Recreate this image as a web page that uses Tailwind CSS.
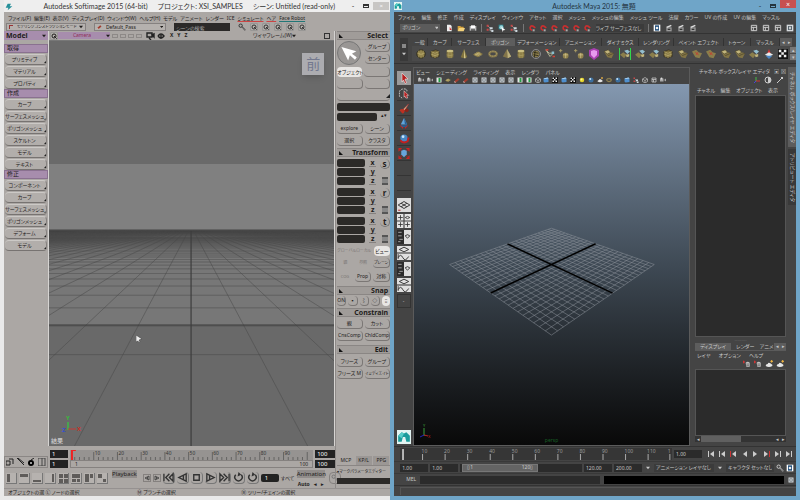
<!DOCTYPE html>
<html lang="ja">
  <head>
    <meta charset="UTF-8" />
    <meta name="viewport" content="width=device-width, initial-scale=1.0" />
    <title>Softimage / Maya</title>
    <script src="https://cdn.jsdelivr.net/npm/@tailwindcss/browser@4"></script>
  </head>
  <body class="bg-[#6fa5c8] font-['Noto_Sans','Noto_Sans_CJK_JP',sans-serif] text-[5px] leading-none [font-feature-settings:'palt'] whitespace-nowrap">
    <!-- shared icon symbols -->
    <svg class="hidden">
      <symbol id="arrow" viewBox="0 0 12 12"><path d="M3 1l1 9 2-2.500 2 3.500 1.500-1-2-3 3-.5z" fill="currentColor" /></symbol>
      <symbol id="down" viewBox="0 0 6 6"><path d="M0 1h6L3 5z" fill="currentColor" /></symbol>
      <symbol id="corner" viewBox="0 0 4 4"><path d="M4 0v4H0z" fill="#222" /></symbol>
      <symbol id="fold" viewBox="0 0 5 5"><path d="M0 0v5h5z" fill="#111" /></symbol>
      <symbol id="doc" viewBox="0 0 12 12"><path d="M3 1h5l2 2v8H3z" fill="#eee" /><path d="M7 4l3 5H7z" fill="#c33" /></symbol>
      <symbol id="folder" viewBox="0 0 12 12"><path d="M1 10V3h4l1 1h4v2z" fill="#d3a13c" /><path d="M3 6h9l-2 5H1z" fill="#f4d27a" /></symbol>
      <symbol id="save" viewBox="0 0 12 12"><path d="M1 3h10v7H1z" fill="#bbb" /><path d="M3 2h6v4H3z" fill="#fff" /><path d="M3 8h6v2H3z" fill="#444" /></symbol>
      <symbol id="nodes" viewBox="0 0 12 12"><path d="M2 2l4 4v4h5" stroke="#bbb" fill="none" /><path d="M1 1h3v3H1zM1 7h3v3H1z" fill="#c94848" /><path d="M6 5h4v3H6zM8 9h3v3H8z" fill="#cdd8df" /></symbol>
      <symbol id="pick" viewBox="0 0 12 12"><path d="M1 1h7v7H1z" fill="#2d8894" /><circle cx="5" cy="5" r="3" fill="#9fd6d9" /><path d="M5 4l6 5-3 .5L7 12z" fill="#fff" /></symbol>
      <symbol id="magnet" viewBox="0 0 12 12"><path d="M2 3l1 4c1 3 5 3 6-1L8 3" fill="none" stroke="#c92f2f" stroke-width="2.500" transform="rotate(140 6 6)" /><path d="M7 8h3v3H7z" fill="#aaa" /></symbol>
      <symbol id="clap" viewBox="0 0 12 12"><path d="M2 5h8v6H2z" fill="#999" /><path d="M2 4l7-3 1 2-7 3z" fill="#ddd" /><path d="M4 7h4v2H4z" fill="#333" /></symbol>
      <symbol id="render" viewBox="0 0 12 12"><path d="M1 1h10v10H1z" fill="#fff" /><path d="M3 2h6v8H3z" fill="#24517c" /><circle cx="6" cy="6" r="2" fill="#eee" /></symbol>
      <symbol id="panes" viewBox="0 0 12 12"><path d="M2 2h8v8H2zM2 5h8M5 5v5" fill="none" stroke="#ccc" stroke-width="1.500" /></symbol>
      <symbol id="sphere" viewBox="0 0 12 12"><circle cx="6" cy="6" r="5" fill="#82733f" stroke="#292617" /><path d="M1.500 5q4.500 3 9 0M6 1v10M3 2q2 4 0 8M9 2q-2 4 0 8" stroke="#cfc17c" stroke-width=".6" fill="none" /></symbol>
      <symbol id="cube" viewBox="0 0 12 12"><path d="M1 3l6-2 4 2v6l-5 2-5-2z" fill="#7b6c3a" stroke="#29251a" stroke-width=".7" /><path d="M1 3l5 2 5-2M6 5v6M3.500 4v6M8.500 4v6M1 6l5 2 5-2" stroke="#cdbf7d" stroke-width=".6" fill="none" /></symbol>
      <symbol id="cyl" viewBox="0 0 12 12"><path d="M2 2h8v8q-4 2-8 0z" fill="#82743f" /><ellipse cx="6" cy="2.500" rx="4" ry="1.500" fill="#cbbf82" /><path d="M4 4v7M6 4v7M8 4v7M2 7q4 2 8 0" stroke="#b9ab6a" stroke-width=".6" fill="none" /></symbol>
      <symbol id="cone" viewBox="0 0 12 12"><path d="M6 0l4 10q-4 2-8 0z" fill="#82743f" /><path d="M6 0v11l2 0z" fill="#d2c58a" /></symbol>
      <symbol id="plane" viewBox="0 0 12 12"><path d="M0 7l6-4 6 3-6 4z" fill="#8d7d45" /><path d="M2 5.500l6 3M4 4.500l6 3M3 8l6-3M2 7l6-3" stroke="#d5c78a" stroke-width=".6" /></symbol>
      <symbol id="torus" viewBox="0 0 12 12"><ellipse cx="6" cy="6" rx="4.500" ry="3" fill="none" stroke="#85774a" stroke-width="2.500" /><ellipse cx="6" cy="5.500" rx="4.500" ry="3" fill="none" stroke="#d2c48a" stroke-width=".7" stroke-dasharray="1 1" /></symbol>
      <symbol id="pyr" viewBox="0 0 12 12"><path d="M6 0l5 9-4 2-6-2z" fill="#83754a" /><path d="M6 0l5 9-4 2z" fill="#bdb07c" /></symbol>
      <symbol id="ring" viewBox="0 0 12 12"><circle cx="6" cy="6" r="5.400" fill="none" stroke="#aaa" stroke-width=".8" /><circle cx="6" cy="6" r="4" fill="#8b7d4b" /><path d="M3 4l6 1M3 7l6 1M5 2L4 10" stroke="#292617" /></symbol>
      <symbol id="curve" viewBox="0 0 12 12"><path d="M1 1l4 4h5L6 9z" fill="none" stroke="#c5c5a0" /><path d="M1 0h3v2H1zM9 8h3v2H9z" fill="#d04438" /><path d="M8 3h3v3H8z" fill="#8abfce" /></symbol>
      <symbol id="poly" viewBox="0 0 12 12"><path d="M0 3l5-2 3 3 4 1-3 6-5-1z" fill="#827445" /><path d="M5 1l3 3-4 2-4-3zM5 8l7-3" fill="#c2b57c" stroke="#373220" stroke-width=".6" /></symbol>
      <symbol id="polyb" viewBox="0 0 12 12"><path d="M0 7l4-3 4 3-3 4z" fill="#8b7e4b" /><path d="M5 2l4-1 3 2-3 3z" fill="#94bfcf" /><path d="M7 7l4-1v3L8 10z" fill="#c4b67c" /></symbol>
      <symbol id="polyr" viewBox="0 0 12 12"><path d="M0 3l5-2 3 3 4 1-3 6-5-1z" fill="#8b7e4b" /><path d="M4 4l4 3M7 4L5 7" stroke="#c83a2e" /></symbol>
      <symbol id="dots" viewBox="0 0 12 12"><circle cx="8" cy="8" r="3.500" fill="#8f804b" /><path d="M5 7h6M8 5v6" stroke="#ded19a" stroke-width=".7" /><path d="M0 2h4M2 0v4" stroke="#b1a369" /></symbol>
      <symbol id="gem" viewBox="0 0 12 12"><path d="M1 2l5-2 5 2v6l-5 4-5-4z" fill="#a93fb0" /><path d="M3 3l3-1 3 1v4L6 10 3 7z" fill="#e79aee" /></symbol>
      <symbol id="topc" viewBox="0 0 12 12"><path d="M6 0l2 5H4z" fill="#d33" /><path d="M1 7l5-3 5 3-5 2z" fill="#e8e8e8" /><path d="M2 8h8l-4 4z" fill="#4a86c8" /></symbol>
      <symbol id="check" viewBox="0 0 12 12"><path d="M0 0h12v12H0z" fill="#111" /><path d="M1 1h3v3H1zM7 1h3v3H7zM4 4h3v3H4zM1 7h3v3H1zM7 7h3v3H7z" fill="#eee" /></symbol>
      <symbol id="box" viewBox="0 0 12 12"><path d="M1 1h10v10H1z" fill="#d5d9dc" /><path d="M3 3h6v6H3z" fill="#58656d" /><path d="M5 4h2v4H5z" fill="#fff" /></symbol>
      <symbol id="green" viewBox="0 0 12 12"><path d="M1 1h10v10H1z" fill="#e6e6e6" /><path d="M5 2h4v8H5z" fill="#239a43" /></symbol>
      <symbol id="wire" viewBox="0 0 12 12"><path d="M1 4l5-3 5 3v5l-5 3-5-3zM1 4l5 3 5-3M6 7v5" fill="none" stroke="#bbb" stroke-width="1.500" /></symbol>
      <symbol id="blue" viewBox="0 0 12 12"><path d="M1 3l8-2 2 2v7l-8 1-2-2z" fill="#4f8fce" /><path d="M1 3l8-2 2 2-8 1z" fill="#b5d9f2" /></symbol>
      <symbol id="bulb" viewBox="0 0 12 12"><circle cx="6" cy="6" r="4.500" fill="#e4d427" /><circle cx="5" cy="5" r="2" fill="#fff6a0" /></symbol>
      <symbol id="ball" viewBox="0 0 12 12"><circle cx="6" cy="6" r="5" fill="#3c6f9f" /><circle cx="4.500" cy="4" r="2" fill="#c8e4f8" /></symbol>
      <symbol id="cam" viewBox="0 0 12 12"><path d="M0 3h7v6H0zM8 6l4-3v6z" fill="#aaa" /><circle cx="3" cy="3" r="2" fill="#ddd" /></symbol>
      <symbol id="pen" viewBox="0 0 12 12"><path d="M1 8l7-6 3 3-7 6H1z" fill="#a23d30" /><path d="M1 8l3 3H1z" fill="#eee" /></symbol>
      <symbol id="sel" viewBox="0 0 12 12"><path d="M4 1l6 6H7l1.500 4-1.500.5L5.500 8 4 10z" fill="#b52222" stroke="#fff" stroke-width=".5" /></symbol>
      <symbol id="lasso" viewBox="0 0 12 12"><path d="M1 4q1-3 5-3t3 3M1 5v4l3 2" stroke="#ccc" stroke-dasharray="2 1" fill="none" /><path d="M6 3l5 5H9l1 3H8L7 9l-1 1z" fill="#b52222" stroke="#fff" stroke-width=".5" /></symbol>
      <symbol id="brush" viewBox="0 0 12 12"><path d="M11 1L5 7l2 1z" fill="#e6c49a" stroke="#a33" stroke-width=".6" /><path d="M1 8q3-3 6 0l-1 3q-2 1-3-1z" fill="#bd3021" /><circle cx="9" cy="8" r="2" fill="#8c2218" /></symbol>
      <symbol id="move" viewBox="0 0 12 12"><path d="M6 0l3.500 7h-7z" fill="#62a4dc" /><path d="M6 0l1 7h2.500z" fill="#2a6093" /><path d="M1 8l4 1v3zM11 8l-4 1v3z" fill="#cc2424" /><path d="M3 7q3 2 6 0v2q-3 2-6 0z" fill="#2c5d90" /></symbol>
      <symbol id="rot" viewBox="0 0 12 12"><circle cx="6" cy="5.500" r="4" fill="#4887c3" /><circle cx="5" cy="4" r="1.500" fill="#cae5fa" /><path d="M2 8q3 4 8 1l1-4" stroke="#c41f1f" stroke-width="2" fill="none" /></symbol>
      <symbol id="scale" viewBox="0 0 12 12"><path d="M0 0h4L0 4zM12 0v4L8 0zM0 12V8l4 4zM12 12H8l4-4z" fill="#cc2424" /><path d="M1 1l10 10M11 1L1 11" stroke="#b32020" /><path d="M3 3l3-1 3 1v4L6 10 3 7z" fill="#68a6dc" /></symbol>
      <symbol id="persp" viewBox="0 0 12 12"><path d="M0 0h12v12H0z" fill="#dcdcdc" /><path d="M1 6l5-3 5 3-5 3zM3.500 4.500l5 3M8.500 4.500l-5 3" fill="none" stroke="#333" stroke-width=".8" /><path d="M1 10h2v1H1z" fill="#b44" /></symbol>
      <symbol id="four" viewBox="0 0 12 12"><path d="M0 0h12v12H0z" fill="#e3e3e3" /><path d="M6 0v12M0 6h12" stroke="#444" /><path d="M3 1v4M1 3h4M3 7v4M1 9h4M9 7v4M7 9h4M7 3l2-1 2 1-2 1z" stroke="#333" stroke-width=".7" fill="none" /></symbol>
      <symbol id="split" viewBox="0 0 12 12"><path d="M0 0h12v12H0z" fill="#2c2c2c" /><path d="M6 0h6v12H6z" fill="#dedede" /><path d="M1 2h3M1 5h3M2 8h3M1 10h2" stroke="#aaa" stroke-width=".8" /><path d="M7 5l2-1 2 1-2 2z" fill="none" stroke="#222" stroke-width=".7" /></symbol>
      <symbol id="graph" viewBox="0 0 12 12"><path d="M0 0h12v12H0z" fill="#dfdfdf" /><path d="M0 6h12" stroke="#444" /><path d="M2 3l4-2 4 2-4 2zM1 11V7M1 10q2-4 4 0t5-1" fill="none" stroke="#333" stroke-width=".8" /></symbol>
      <symbol id="maya" viewBox="0 0 12 12"><path d="M0 0h12v12H0z" fill="#e3f4f2" /><path d="M1 10V5l3-3 2 1 2-1 3 3v5H8L7 6H5l-1 4z" fill="#1b9c9b" /><path d="M1 5l3-3 2 1-2 4z" fill="#55ccc7" /></symbol>
      <symbol id="soft" viewBox="0 0 12 12"><path d="M4 1h5L7 5h4L4 11l1-4H1z" fill="#258f99" /></symbol>
      <symbol id="cloud" viewBox="0 0 12 12"><path d="M1 9q0-3 3-3 1-3 4-1l3 2v2q-5 3-10 0z" fill="#e6e6e6" /><path d="M10 0v4M8 2h4" stroke="#f3b743" stroke-width="1.500" /></symbol>
      <symbol id="lay" viewBox="0 0 12 12"><path d="M1 1v4M0 3h3" stroke="#d33" stroke-width="1.500" /><path d="M4 4q3-3 6 0v6H5z" fill="#c2c2c2" /><path d="M5 6h4M5 8h4" stroke="#555" /></symbol>
      <symbol id="skey" viewBox="0 0 12 12"><circle cx="4" cy="4" r="2.500" fill="none" stroke="currentColor" stroke-width="1.500" /><path d="M6 6l4 5 1-1-4-4" stroke="currentColor" fill="none" /></symbol>
      <symbol id="gearb" viewBox="0 0 12 12"><path d="M1 1h10v10H1z" fill="#b5b2ae" stroke="#888" /><circle cx="6" cy="6" r="3" fill="none" stroke="currentColor" stroke-width="1.500" /><path d="M6 6l4 4" stroke="currentColor" stroke-width="1.500" /></symbol>
      <symbol id="loop" viewBox="0 0 12 12"><path d="M3 3a4 4 0 1 0 6 0" fill="none" stroke="#333" stroke-width="1.600" /><path d="M6 0l3 3-4 2z" fill="#333" /></symbol>
      <symbol id="first" viewBox="0 0 12 12"><path d="M1 2v8M7 2L3 6l4 4M11 2L7 6l4 4z" fill="none" stroke="#333" stroke-width="1.500" /></symbol>
      <symbol id="playb" viewBox="0 0 12 12"><path d="M10 2v8L2 6zM7 4v4" fill="none" stroke="#333" stroke-width="1.500" /></symbol>
      <symbol id="stop" viewBox="0 0 12 12"><path d="M3 3h6v6H3z" fill="none" stroke="#333" stroke-width="1.500" /></symbol>
    </svg>

    <div class="flex h-screen">
      <!-- Softimage -->
      <section class="flex min-w-0 flex-[392] flex-col overflow-hidden border-b-4 border-l-4 border-[#e9e9e9] bg-[#aba7a4] text-[#1f1d1c]">
        <header class="flex h-3 shrink-0 items-center bg-[#eeeeee] px-px font-['Lato','Noto_Sans_CJK_JP',sans-serif] text-[7px] text-[#333]">
          <svg class="mt-px size-2"><use href="#soft" /></svg>
          <h1 class="flex flex-1 justify-end gap-2.5 pr-3"><span>Autodesk Softimage 2015 (64-bit)</span><span>プロジェクト: XSI_SAMPLES</span><span>シーン: Untitled (read-only)</span></h1>
          <button class="w-3" aria-label="最小化">-</button>
          <button class="mx-1 h-1 w-1.5 border border-t-2 border-[#333]" aria-label="最大化"></button>
          <button class="h-2 w-4 bg-[#c8c6c4] text-[6px] leading-none text-white" aria-label="閉じる">×</button>
        </header>

        <nav id="softMenu" class="flex h-2.5 w-[78%] shrink-0 items-center justify-between pt-0.5 pl-1"></nav>

        <div class="flex h-[9px] shrink-0 items-center gap-2 pt-px pl-0.5">
          <label class="flex h-2 w-20 items-center border border-[#858180] bg-[#b5b1ae] px-0.5"><span class="mr-1 h-1 w-1 border-t border-l border-[#933]"></span>
            <select class="w-full appearance-none text-[4px]" aria-label="モード"><option>モデリングコンストラクションモード</option></select><svg class="size-1 shrink-0"><use href="#down" /></svg></label>
          <label class="flex h-2 w-18 items-center border border-[#858180] bg-[#b5b1ae] px-0.5"><svg class="mr-1 size-1.5"><use href="#pen" /></svg>
            <select class="w-full appearance-none" aria-label="パス"><option>Default_Pass</option></select><svg class="size-1"><use href="#down" /></svg></label>
          <input class="h-2 w-14 bg-[#2b2928] px-0.5 text-[#aaa]" value="シーンの検索" aria-label="シーンの検索" />
          <div id="softTools" class="flex gap-1"></div>
        </div>

        <div class="flex min-h-0 flex-1">
          <div class="flex min-w-0 flex-1 flex-col">
            <div class="flex min-h-0 flex-1">
              <aside id="softSide" class="w-11 shrink-0"></aside>
              <!-- camera view -->
              <main class="flex min-w-0 flex-1 flex-col border-r border-l border-[#d6d4d2]">
                <div class="flex h-2.5 items-center border-b border-[#777] pl-px">
                  <svg class="size-2"><use href="#gearb" /></svg>
                  <button class="flex h-[7px] w-[52px] items-center justify-center bg-[#a78dad]"><span class="flex-1 text-[#902d58]">Camera</span><svg class="size-1"><use href="#down" /></svg></button>
                  <span class="ml-0.5 flex gap-0.5"><i class="h-1 w-1.5 border border-[#8d8987]"></i><i class="h-1 w-1.5 border border-[#8d8987]"></i><i class="h-1 w-1.5 border border-[#8d8987]"></i><i class="h-1 w-1.5 border border-[#8d8987]"></i></span>
                  <svg class="ml-1 h-2 w-5" viewBox="0 0 20 8"><path d="M1 1h5v4H1zM6 3l2-1v3zM3 6l2 2M12 4q3-4 6 0-3 4-6 0M15 3v4" fill="none" stroke="#222" stroke-width="1.400" /></svg>
                  <b class="ml-1 flex gap-1"><span>X</span><span>Y</span><span>Z</span></b>
                  <span class="ml-auto flex items-center">ワイヤフレーム(W) <svg class="size-1"><use href="#down" /></svg></span>
                  <button class="mr-1 ml-7 size-1.5 border border-[#333]" aria-label="最大化"></button>
                </div>
                <div class="relative min-h-0 flex-1 bg-[#696969]">
                  <svg id="floor" class="size-full" viewBox="0 0 285 405" preserveAspectRatio="xMidYMid slice"></svg>
                  <button class="absolute top-3 right-2.5 flex size-[22px] items-center justify-center bg-[#acacb0] text-[14px] text-[#73788e] shadow-md">前</button>
                  <svg class="absolute top-[294px] left-[87px] h-2 w-1.5" viewBox="0 0 6 8"><path d="M0 0v7l2-1 1 2 1-1-1-2 3-1z" fill="#eee" stroke="#333" stroke-width=".5" /></svg>
                  <svg class="absolute bottom-3 left-3 h-5 w-6 overflow-visible text-[6px] font-bold" viewBox="0 0 24 20"><path d="M7 16V8" stroke="#3fb847" stroke-width="1.500" /><path d="M7 15h8" stroke="#c83b35" /><text x="5" y="6" fill="#39b73e">Y</text><text x="16" y="17" fill="#c8342a">X</text><text x="1" y="18" fill="#3550d2">Z</text></svg>
                  <span class="absolute bottom-0.5 left-0.5 text-[6px] text-[#ddd]">結果</span>
                </div>
              </main>
            </div>
            <!-- time slider -->
            <div class="flex h-[22px] shrink-0 items-end pt-0.5">
              <div class="flex h-3 w-11 shrink-0 items-center justify-around border border-[#8b8785] text-[#222]">
                <svg class="size-2" viewBox="0 0 8 8"><path d="M0 3h4v4H0zM3 1h4v5" fill="none" stroke="#222" /></svg><svg class="size-2" viewBox="0 0 8 8"><path d="M0 0l7 7M1 0l6 5" stroke="#222" /></svg><svg class="size-2" viewBox="0 0 8 8"><circle cx="4" cy="5" r="3" /><path d="M4 2l3-2" stroke="#222" /><circle cx="4" cy="5" r="1" fill="#ccc" /></svg><svg class="size-2" viewBox="0 0 8 8"><path d="M0 0h7v8H0zM4 0v8" fill="none" stroke="#444" /></svg>
              </div>
              <div class="ml-0.5 flex w-[18px] flex-col gap-0.5"><input class="h-2 w-full bg-[#222] px-0.5 text-[6px] text-white" value="1" aria-label="開始" /><input class="h-2 w-full bg-[#222] px-0.5 text-[6px] text-white" value="1" aria-label="範囲開始" /></div>
              <div class="mx-0.5 min-w-0 flex-1">
                <svg id="softRuler" class="h-2.5 w-full bg-[#969391] text-[5px]" viewBox="0 0 248 10" preserveAspectRatio="none"></svg>
                <div class="flex h-2 items-center justify-between border border-[#85817f] px-1"><span>1</span><span>100</span></div>
              </div>
              <div class="flex w-5 flex-col gap-0.5"><input class="h-2 w-full bg-[#222] px-0.5 text-[6px] text-white" value="100" aria-label="終了" /><input class="h-2 w-full bg-[#222] px-0.5 text-[6px] text-white" value="100" aria-label="範囲終了" /></div>
            </div>
            <div class="flex h-5 shrink-0 items-center gap-0.5 pl-0.5">
              <div id="layouts" class="flex gap-0.5"></div>
              <button class="mr-1 mb-2 ml-0.5 h-2 w-7 bg-[#918d8b] text-[6px] leading-none">Playback</button>
              <div id="transport" class="flex items-center gap-0.5"></div>
              <input class="h-2 w-[18px] rounded-xs bg-[#222] px-1 text-[6px] text-white" value="1" aria-label="フレーム" />
              <button class="w-3">すべて</button>
              <div class="ml-0.5 flex w-7 flex-col items-center gap-1"><button class="h-2 w-full bg-[#918d8b] text-[6px] leading-none">Animation</button><span class="flex gap-1 font-bold">Auto <span>◂</span><span>▸</span></span></div>
              <button class="ml-0.5 flex size-3 shrink-0 items-center justify-center rounded border border-[#85817f] text-[#777]" aria-label="キー"><svg class="size-2"><use href="#skey" /></svg></button>
            </div>
          </div>
          <aside id="mcp" class="flex w-[55px] shrink-0 flex-col border-l border-[#8e8a88] pl-px"></aside>
        </div>
        <footer class="flex h-2 shrink-0 items-center border-t border-[#959190] pl-1"><span class="flex-[130]">オブジェクトの選 Ⓛ ノードの選択</span><span class="flex-[105]">Ⓜ ブランチの選択</span><span class="flex-[150]">Ⓡ ツリー/チェインの選択</span></footer>
      </section>

      <!-- Maya -->
      <section class="flex min-w-0 flex-[408] flex-col overflow-hidden border-r-4 border-b-4 border-l-4 border-[#6fa5c8] bg-[#444444] text-[#c8c8c8]">
        <header class="flex h-3 shrink-0 items-center bg-[#6fa5c8] font-['Lato','Noto_Sans_CJK_JP',sans-serif] text-[7px] text-[#24343f]">
          <svg class="size-2"><use href="#maya" /></svg>
          <h1 class="flex-1 pl-8 text-center">Autodesk Maya 2015: 無題</h1>
          <button class="w-3" aria-label="最小化">-</button><button class="mx-1 h-1 w-1.5 border border-t-2 border-[#24343f]" aria-label="最大化"></button>
          <button class="mb-1 h-2 w-4 bg-[#c75050] text-[7px] leading-none text-white" aria-label="閉じる">×</button>
        </header>
        <nav id="mayaMenu" class="flex h-2.5 w-[96%] shrink-0 items-center justify-between pl-1"></nav>
        <div class="flex h-3 shrink-0 items-center justify-between border-b border-[#333] pr-0.5 pl-1.5">
          <label class="flex h-2 w-10 items-center bg-[#5b5b5b] px-0.5"><select class="w-full appearance-none" aria-label="メニューセット"><option>ポリゴン</option></select><svg class="size-1"><use href="#down" /></svg></label>
          <div id="status1" class="flex gap-1"></div>
          <div id="status2" class="flex gap-1 border-l border-[#777] pl-1"></div>
          <div id="status3" class="flex gap-[3px] border-l border-[#777] pl-1"></div>
          <label><input class="h-2 w-12 bg-[#3b3b3b]" value="ライブ サーフェスなし" aria-label="ライブ サーフェス" /></label>
          <div id="status4" class="flex gap-1 border-l border-[#777] pl-1"></div>
          <div id="status5" class="ml-12 flex gap-1"></div>
        </div>
        <!-- shelf -->
        <div class="flex h-[30px] shrink-0 gap-1 border-b border-[#333] pt-1 pb-0.5 pl-1.5">
          <div class="flex w-2 flex-col items-center justify-center gap-1 bg-[#393939]"><i class="size-1 bg-[#888]"></i><svg class="size-1"><use href="#down" /></svg></div>
          <div class="flex min-w-0 flex-1 flex-col">
            <div id="shelfTabs" class="flex h-2 items-stretch"></div>
            <div class="flex flex-1 items-center gap-0.5 bg-[#4a4a4a] pl-1">
              <div id="shelf" class="flex min-w-0 flex-1 items-center justify-between"></div>
              <div class="flex w-1.5 flex-col gap-px text-center"><button class="h-1.5 bg-[#777] leading-none" aria-label="上">▴</button><button class="h-1.5 bg-[#777] leading-none" aria-label="下">▾</button></div>
            </div>
          </div>
        </div>

        <div class="flex min-h-0 flex-1 pt-[3px]">
          <aside id="toolbox" class="flex w-[19px] shrink-0 flex-col items-center pt-1"></aside>
          <main class="flex min-w-0 flex-1 flex-col border border-[#5b5b5b]">
            <nav id="panelMenu" class="flex h-2 w-[53%] items-center justify-between pl-0.5"></nav>
            <div id="panelIcons" class="flex h-2 w-11/12 items-center justify-between pl-1"></div>
            <div class="relative min-h-0 flex-1 bg-linear-to-b from-[#8498b0] via-[#3f4a55] to-[#090909]">
              <svg id="grid" class="size-full" viewBox="0 0 274 358" preserveAspectRatio="xMidYMid slice"></svg>
              <svg class="absolute bottom-1.5 left-1 h-4 w-3 overflow-visible text-[4px]" viewBox="0 0 12 16"><path d="M6 13V5" stroke="#3a9e3a" /><path d="M6 12l4 1" stroke="#b22" /><path d="M6 12l-4 2" stroke="#22b" /><text x="5" y="4" fill="#3a9e3a">Y</text><text x="10" y="15" fill="#c22">X</text></svg>
              <span class="absolute inset-x-0 bottom-0.5 text-center text-[#175e25]">persp</span>
            </div>
          </main>
          <!-- channel box / layer editor -->
          <aside class="ml-1 flex w-[94px] shrink-0 flex-col pr-0.5 pl-px">
            <h2 class="flex h-2 items-center"><span class="flex-1 text-center">チャネル ボックス/レイヤ エディタ</span><span class="flex gap-0.5"><button aria-label="フロート">▣</button><button aria-label="閉じる">⊠</button></span></h2>
            <div class="flex h-2.5 items-center justify-end gap-1 pr-0.5"><svg class="size-1.5" viewBox="0 0 6 6"><path d="M2 4V0" stroke="#4b4" /><path d="M2 4h4" stroke="#c33" /><path d="M2 4L0 6" stroke="#44d" /></svg><svg class="size-2" viewBox="0 0 8 8"><circle cx="4" cy="4" r="3" fill="none" stroke="#ccc" /><path d="M4 1a3 3 0 0 1 0 6z" fill="#ccc" /></svg><svg class="size-2" viewBox="0 0 8 8"><path d="M1 7l6-6M5 1l2 2" stroke="#ccc" /></svg></div>
            <nav class="flex h-2.5 items-center justify-between pr-2 pl-0.5"><a href="#">チャネル</a><a href="#">編集</a><a href="#">オブジェクト</a><a href="#">表示</a></nav>
            <div class="min-h-0 flex-1 border border-[#555] bg-[#2b2b2b]"></div>
            <div class="flex h-1.5 items-center justify-center text-[#777]">·········</div>
            <div class="flex h-2 items-stretch border-b border-[#5b5b5b]"><button class="flex-[34] bg-[#5d5d5d]">ディスプレイ</button><button class="flex-[26]">レンダー</button><button class="flex-[14]">アニメ</button><button class="w-1.5 bg-[#5d5d5d]" aria-label="前">◂</button><button class="w-1.5 bg-[#5d5d5d]" aria-label="次">▸</button></div>
            <nav class="flex h-2 w-3/4 items-center justify-between pl-0.5"><a href="#">レイヤ</a><a href="#">オプション</a><a href="#">ヘルプ</a></nav>
            <div id="layerIcons" class="flex h-2.5 items-center justify-end gap-[3px] pr-0.5"></div>
            <div class="h-[67px] border border-[#555] bg-[#2b2b2b]"></div>
            <div class="mb-1 flex h-1.5 items-center bg-[#333]"><button class="w-1.5" aria-label="左">◂</button><span class="h-full w-10 bg-[#606060]"></span><button class="ml-auto w-1.5" aria-label="左へ">◂</button><button class="w-1.5" aria-label="右へ">▸</button></div>
          </aside>
          <div class="flex w-2 shrink-0 flex-col gap-0.5"><button class="h-20 bg-[#5d5d5d] [text-orientation:sideways] [writing-mode:vertical-rl]">チャネル ボックス/レイヤ エディタ</button><button class="h-14 bg-[#393939] [text-orientation:sideways] [writing-mode:vertical-rl]">アトリビュート エディタ</button></div>
        </div>

        <!-- time slider, range slider, command line -->
        <div class="flex h-[15px] shrink-0 items-center gap-0.5 border-t border-[#333] pl-1.5">
          <svg id="mayaRuler" class="h-3 min-w-0 flex-[270] bg-[#363636] text-[5px]" viewBox="0 0 270 12" preserveAspectRatio="none"></svg>
          <input class="h-2 w-7 bg-[#2b2b2b] px-0.5" value="1.00" aria-label="現在のフレーム" />
          <div id="mayaPlay" class="flex w-[92px] items-center justify-between px-1"></div>
        </div>
        <div class="flex h-3 shrink-0 items-center gap-0.5 border-t border-[#393939] pl-1.5">
          <input class="h-2 w-7 bg-[#2b2b2b] px-0.5" value="1.00" aria-label="アニメーション開始" /><input class="h-2 w-7 bg-[#2b2b2b] px-0.5" value="1.00" aria-label="再生開始" />
          <div class="h-2 min-w-0 flex-1 bg-[#2b2b2b]"><div class="ml-0.5 flex h-full w-5/8 items-center justify-between border border-[#777] bg-[#646464] px-1"><span>▯1</span><span>120▯</span></div></div>
          <input class="h-2 w-7 bg-[#2b2b2b] px-0.5" value="120.00" aria-label="再生終了" /><input class="h-2 w-7 bg-[#2b2b2b] px-0.5" value="200.00" aria-label="アニメーション終了" />
          <svg class="mx-0.5 size-1"><use href="#down" /></svg>
          <select class="h-2 w-[60px] appearance-none bg-[#3b3b3b] px-0.5" aria-label="アニメーション レイヤ"><option>アニメーション レイヤなし</option></select>
          <svg class="mx-0.5 size-1"><use href="#down" /></svg>
          <select class="h-2 w-[48px] appearance-none bg-[#3b3b3b] px-0.5" aria-label="キャラクタ セット"><option>キャラクタ セットなし</option></select>
          <svg class="size-2"><use href="#skey" /></svg><svg class="mr-0.5 size-2"><use href="#render" /></svg>
        </div>
        <div class="flex h-3 shrink-0 items-center gap-1 border-t border-[#393939] pl-3">
          <label for="mel">MEL</label><input id="mel" class="h-2 min-w-0 flex-1 bg-[#2b2b2b]" /><output class="h-2 min-w-0 flex-1 bg-black"></output><svg class="mr-0.5 size-1.5"><use href="#box" /></svg>
        </div>
        <footer class="h-[11px] shrink-0 border-t border-[#333] pt-px pl-1.5"><div class="h-2 border-t border-l border-[#555]"></div></footer>
      </section>
    </div>

    <script>
      const put = (id, html) => (document.getElementById(id).innerHTML = html);
      const icons = (names, cls) => names.split(" ").map((n) => `<button class="${cls}" aria-label="${n}"><svg class="size-full"><use href="#${n}"/></svg></button>`).join("");
      const links = (list) => list.map((t) => `<a href="#">${t}</a>`).join("");

      put("softMenu", links(["ファイル(F)", "編集(E)", "表示(V)", "ディスプレイ(D)", "ウィンドウ(W)", "ヘルプ(H)", "モデル", "アニメート", "レンダー", "ICE"])
        + `<a href="#" class="underline decoration-[#c44]">シミュレート</a><a href="#" class="underline decoration-[#c44]">ヘア</a><a href="#" class="underline decoration-[#277]">Face Robot</a>`);
      put("softTools", icons("skey gearb gearb gearb gearb gearb", "size-2 text-[#333]"));
      put("mayaMenu", links(["ファイル", "編集", "修正", "作成", "ディスプレイ", "ウィンドウ", "アセット", "選択", "メッシュ", "メッシュの編集", "メッシュ ツール", "法線", "カラー", "UV の作成", "UV の編集", "マッスル"]));
      put("panelMenu", links(["ビュー", "シェーディング", "ライティング", "表示", "レンダラ", "パネル"]));

      // Softimage left toolbar
      const groups = [
        ["取得", ["プリミティブ", "マテリアル", "プロパティ"]],
        ["作成", ["カーブ", "サーフェスメッシュ", "ポリゴンメッシュ", "スケルトン", "モデル", "テキスト"]],
        ["修正", ["コンポーネント", "カーブ", "サーフェスメッシュ", "ポリゴンメッシュ", "デフォーム", "モデル"]],
      ];
      put("softSide", `<button class="mb-1 flex h-[9px] w-full items-center justify-between bg-[#a78dad] px-0.5 text-[7px] font-bold">Model<svg class="size-1"><use href="#down"/></svg></button>`
        + groups.map(([title, items]) => `<h2 class="h-[9px] border border-[#8a7190] bg-[#a78dad] px-0.5 text-[6px] leading-none">${title}</h2>`
          + items.map((t) => `<div class="h-3 px-px pt-px"><button class="flex h-[11px] w-full items-center rounded-sm border-t border-r border-b border-t-[#ccc9c6] border-r-[#85817f] border-b-[#777371] bg-[#b2aeab]"><span class="flex-1">${t}</span><svg class="mt-1 size-0.5"><use href="#corner"/></svg></button></div>`).join("")).join(""));

      // Softimage main command panel
      const head = (t) => `<h2 class="flex h-[9px] shrink-0 items-center justify-between border-y border-[#8a8684] bg-[#a09c99] px-0.5 text-[7px] font-bold"><svg class="size-1"><use href="#fold"/></svg>${t}</h2>`;
      const key = (t) => `<button class="h-2.5 min-w-0 flex-1 rounded-sm border-r border-b border-[#7b7775]">${t}</button>`;
      const dim = (t) => `<button class="h-2.5 min-w-0 flex-1 text-[4px] text-[#777371]">${t}</button>`;
      const on = (t) => `<button class="h-2.5 min-w-0 flex-1 rounded-sm bg-[#e8e6e4]">${t}</button>`;
      const small = (t) => `<button class="h-2.5 min-w-0 flex-1 rounded-sm border-r border-b border-[#7b7775] text-[4px]">${t}</button>`;
      const row = (...cells) => `<div class="mb-0.5 flex h-2.5 gap-0.5">${cells.join("")}</div>`;
      const srt = (mode) => `<div class="mb-[3px] flex gap-1"><div class="flex w-7 flex-col gap-px">${`<input class="h-2 w-full rounded-xs bg-[#2c2a28]" aria-label="${mode}"/>`.repeat(3)}</div>
        <div class="flex flex-1 flex-col gap-px text-[7px] font-bold leading-none">${["x", "y", "z"].map((a) => `<button class="h-2 border-b border-[#85817f] leading-none">${a}</button>`).join("")}</div>
        <div class="flex w-2.5 flex-col items-center justify-between"><button class="size-2.5 rounded-full border-r border-b border-[#777] text-[8px] font-bold leading-none">${mode}</button><i class="h-2 w-1.5 border-y-2 border-[#555] bg-[#888]"></i></div></div>`;
      put("mcp", head("Select")
        + `<div class="mt-px flex h-6 items-center gap-1"><button class="flex size-6 items-center justify-center rounded-full border border-[#777] bg-[#999694] text-white" aria-label="選択"><svg class="size-5 -rotate-20"><use href="#arrow"/></svg></button><div class="flex flex-1 flex-col gap-0.5"><div class="flex">${key("グループ")}</div><div class="flex">${key("センター")}</div></div></div>`
        + `<div class="pt-0.5">${row(on("オブジェクト"), key(""))}${row(key(""), key(""))}</div><div class="mb-0.5 flex h-2.5 items-center justify-end rounded-sm border-b border-[#7b7775]"><svg class="size-1"><use href="#corner"/></svg></div>`
        + `<div class="mb-0.5 h-2 rounded-xs bg-[#2c2a28]"></div><div class="mb-[3px] flex h-2 gap-1"><span class="w-10 rounded-xs bg-[#2c2a28]"></span><span>▴▾</span></div>`
        + row(key("explore"), key("シーン")) + row(key("選択"), key("クラスタ")) + head("Transform")
        + `<div class="pt-0.5">${srt("s")}${srt("r")}${srt("t")}</div>`
        + row(dim("グローバル"), dim("ローカル"), on("ビュー")) + row(dim("親"), dim("参照"), small("プレーン")) + `<div class="pt-0.5 pb-0.5">${row(dim("COG"), key("Prop"), key("対称"))}</div>`
        + head("Snap") + `<div class="pt-px">${row(key("ON"), key("▪"), key("⌇"), key("◇"), on("⁝⁝"))}</div>` + head("Constrain")
        + `<div class="py-0.5">${row(key("親"), key("カット"))}${row(key("CnsComp"), key("ChldComp"))}</div>` + head("Edit")
        + `<div class="pt-[3px]">${row(key("フリーズ"), key("グループ"))}${row(key("フリーズ M"), small("イミディエイト"))}</div>`
        + `<div class="mt-auto flex h-2.5 items-center justify-around border-b border-[#8a8684]"><button class="h-full w-4">MCP</button><button class="h-full w-4 bg-[#9b9795]">KP/L</button><button class="h-full w-4 bg-[#9b9795]">PPG</button></div>
        <label class="mt-1 h-2 text-[4px]" for="mark">▾マークパラメータエディター</label><input id="mark" class="mb-1 h-1.5 bg-[#2c2a28]"/>`);

      const panes = ["M1 1h3v8H1z", "M1 1h8v3H1z", "M1 7h8v2H1z", "M7 1h2v8H7z", "M1 1h4v4H1zM6 1h4v4H6zM1 6h4v4H1zM6 6h4v4H6z", "M1 1h8v4H1zM1 6h4v3H1zM6 6h3v3H6z", "M1 1h4v8H1zM6 1h3v4H6z", "M1 1h4v4H1zM6 6h3v3H6z"];
      put("layouts", panes.map((d, i) => `<button class="size-[11px] border-r border-b border-[#777] bg-[#b6b2af]" aria-label="レイアウト ${i + 1}"><svg class="size-full" viewBox="0 0 10 10"><path d="${d}" fill="#5f5c5a"/></svg></button>`).join(""));
      put("transport", icons("playb", "size-2 border border-[#85817f]") + `<button class="size-2 rotate-180 border border-[#85817f]" aria-label="次"><svg class="size-full"><use href="#playb"/></svg></button>`
        + icons("first playb stop", "size-3 rounded border-r border-b border-[#777]") + ["playb", "first"].map((n) => `<button class="size-3 rotate-180 rounded border-t border-l border-[#777]" aria-label="再生"><svg class="size-full"><use href="#${n}"/></svg></button>`).join("") + icons("loop loop", "size-3 rounded border-r border-b border-[#777]"));

      // Maya icon rows
      put("status1", icons("doc folder save", "size-2"));
      put("status2", icons("nodes pick nodes", "size-2"));
      put("status3", icons("magnet magnet magnet magnet magnet magnet", "size-2"));
      put("status4", icons("render clap clap clap", "size-2"));
      put("status5", icons("panes panes panes box", "size-2"));
      put("panelIcons", icons("cam cam green plane pen pen box box box box box green green wire blue check blue check bulb ball cloud torus ball blue nodes wire panes cam", "size-1.5"));
      put("layerIcons", icons("lay lay cloud cloud", "size-2"));
      put("shelf", icons("sphere cube cyl cone plane torus pyr cyl ring curve dots dots", "size-2.5") + icons("gem", "size-3") + icons("poly", "size-2.5")
        + `<button class="size-3 border-x border-[#31d94b]" aria-label="クワッド描画"><svg class="size-full"><use href="#polyb"/></svg></button>`
        + icons("polyb polyb cube poly polyr polyr poly poly polyb topc check", "size-2.5"));
      put("shelfTabs", [["一般", 15], ["カーブ", 23], ["サーフェス", 32], ["ポリゴン", 29], ["デフォーメーション", 44], ["アニメーション", 41], ["ダイナミクス", 36], ["レンダリング", 34], ["ペイント エフェクト", 48], ["トゥーン", 26], ["マッスル", 28]]
        .map(([t, w], i) => `<button class="${i === 3 ? "bg-[#5d5d5d]" : "border-r border-[#333]"}" style="flex:${w}">${t}</button>`).join("") + `<button class="w-1.5 bg-[#5d5d5d]" aria-label="前">◂</button><button class="mr-1 w-1.5 bg-[#5d5d5d]" aria-label="次">▸</button>`);
      const slot = "mb-px flex h-[14px] w-[14px] items-center justify-center border-b border-[#343434] p-px";
      put("toolbox", `<button class="mb-0.5 size-3.5 bg-[#9a9a9a] p-px" aria-label="選択"><svg class="size-full"><use href="#sel"/></svg></button>` + icons("lasso brush move rot scale", slot)
        + `<i class="${slot}"></i><i class="${slot}"></i>` + `<div class="mt-1.5 flex flex-col gap-0.5">${icons("persp four split graph split graph", "size-3.5")}<button class="size-3.5 border border-[#333]">-</button></div>`
        + `<svg class="mt-auto mb-0.5 size-3.5"><use href="#maya"/></svg>`);
      const tri = { l: "M6 1v6L2 4z", r: "M2 1v6l4-3z" };
      put("mayaPlay", [["l", 0, "#ccc"], ["l", 0, "#ccc"], ["l", 0, "#c33"], ["l", 9, ""], ["r", 9, ""], ["r", 7, "#c33"], ["r", 7, "#ccc"], ["r", 7, "#ccc"]]
        .map(([d, x, c], i) => `<button class="size-2" aria-label="再生 ${i + 1}"><svg class="size-full" viewBox="0 0 8 8"><path d="${tri[d]}" fill="#ccc"/><path d="M${x} 1h1v6h-1z" fill="${c}"/></svg></button>`).join(""));

      // rulers
      let marks = "";
      for (let f = 1; f <= 100; f++) {
        if (f % 2 && f > 1) continue;
        const x = f * 2.42;
        marks += `<path d="M${x} ${f % 10 ? 7 : 2}v8" stroke="#444" stroke-width=".6"/>`;
        if (f % 10 === 0 && f < 100) marks += `<text x="${x + 1}" y="5" fill="#333">${f}</text>`;
      }
      put("softRuler", marks + `<path d="M2 10V0h4" stroke="#e22" stroke-width="2" fill="none"/>`);
      marks = `<path d="M3 1v11" stroke="#ddd" stroke-width="1.500"/>`;
      for (let f = 10; f <= 110; f += 10) marks += `<text x="${f * 2.24 - 1}" y="5" fill="#999">${f}</text><path d="M${f * 2.24} 6v6" stroke="#aaa"/>`;
      put("mayaRuler", marks + `<text x="266" y="5" fill="#999">1</text><path d="M268 6v6" stroke="#aaa"/>`);

      // camera floor grid, horizon at y=190
      let floor = `<path d="M0 0h285v123H0z" fill="#6a6a6a"/><path d="M0 123h285v67H0z" fill="#808080"/><path d="M0 190h285v94H0z" fill="#777"/><path d="M0 284h285v121H0z" fill="#696969"/><g stroke="#484848" stroke-width=".6">`;
      for (let n = 3.5; n < 110; n++) floor += `<path d="M0 ${185 + 450 / n}h285" opacity="${n < 40 ? 0.8 : 0.4}"/>`;
      for (let i = -40; i <= 40; i++) {
        const dx = i * 0.53;
        floor += `<path d="M${142 + dx * 5} 190L${142 + dx * 220} 405" opacity=".8"/>`;
      }
      put("floor", floor + `</g><path d="M142 190v215M0 284h285" stroke="#3d3d3d"/>`);

      // perspective grid: unit square mapped onto the four corners
      const [A, B, C, D] = [[36, 179], [137, 143], [239, 179], [137, 249]];
      const d1 = [B[0] - C[0], B[1] - C[1]], d2 = [D[0] - C[0], D[1] - C[1]];
      const s = [A[0] - B[0] + C[0] - D[0], A[1] - B[1] + C[1] - D[1]];
      const det = d1[0] * d2[1] - d2[0] * d1[1];
      const g = (s[0] * d2[1] - d2[0] * s[1]) / det, h = (d1[0] * s[1] - s[0] * d1[1]) / det;
      const pt = (u, v) => {
        const w = g * u + h * v + 1;
        return [0, 1].map((k) => ((B[k] - A[k] + g * B[k]) * u + (D[k] - A[k] + h * D[k]) * v + A[k]) / w).join(" ");
      };
      let lines = "";
      for (let i = 0; i <= 24; i++) {
        const t = i / 24;
        lines += `<path d="M${pt(t, 0)}L${pt(t, 1)}M${pt(0, t)}L${pt(1, t)}" stroke="#8d949b" stroke-width=".5"/>`;
      }
      put("grid", lines + `<path d="M${pt(0.5, 0)}L${pt(0.5, 1)}M${pt(0, 0.5)}L${pt(1, 0.5)}" stroke="#000" stroke-width="1.500"/>`);
    </script>
  </body>
</html>
